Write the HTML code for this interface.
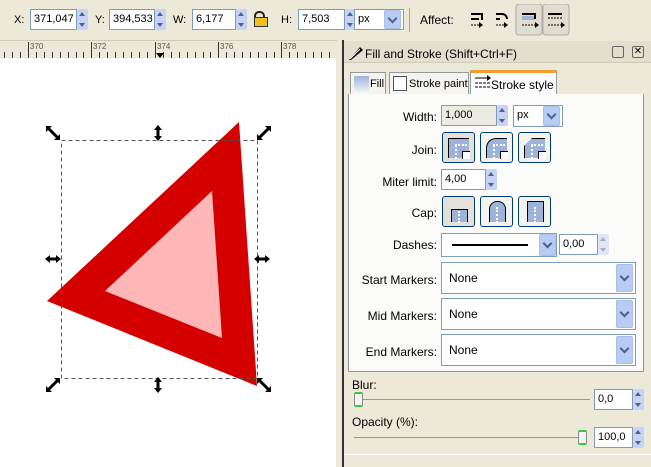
<!DOCTYPE html>
<html><head><style>
*{margin:0;padding:0;box-sizing:border-box}
body{width:651px;height:467px;overflow:hidden;background:#ece9d8;font-family:"Liberation Sans",sans-serif;font-size:11px;color:#000;position:relative}
.a{position:absolute}
.inp{position:absolute;background:#fff;border:1px solid #7f9db9;padding:2px 3px;font-size:11px;height:21px;line-height:15px}
.spin{position:absolute;width:11px;height:21px;background:#c6d3f7;border-radius:2px}
.spin:before{content:"";position:absolute;left:2px;top:3px;border:3px solid transparent;border-bottom:4px solid #4d6185;border-top:0}
.spin:after{content:"";position:absolute;left:2px;bottom:3px;border:3px solid transparent;border-top:4px solid #4d6185;border-bottom:0}
.dd{position:absolute;width:17px;background:#b8cbf5;border-radius:2px;border:1px solid #a9bfe9}
.dd:after{content:"";position:absolute;left:4px;top:50%;width:5px;height:5px;border-right:2px solid #4d6185;border-bottom:2px solid #4d6185;transform:rotate(45deg);margin-top:-5px}
.lbl{position:absolute;text-align:right;width:100px}
.btn{position:absolute;width:33px;height:31px;border:1px solid #003c74;border-radius:3px;background:#f4f3ee}
.btn i{position:absolute;left:5px;top:5px;width:21px;height:20px;background:#9db3d8;border:1px solid #000;border-width:1px 0 0 1px}
.btn b{position:absolute;border-left:2px dotted #fff}
.btn u{position:absolute;left:19px;top:18px;width:8px;height:8px;background:#fff;border:1px solid #000;border-width:1px 0 0 1px}
</style></head><body>
<div class="a" style="left:14px;top:14px">X:</div>
<div class="inp" style="left:30px;top:9px;width:47px">371,047</div><div class="spin" style="left:77px;top:9px"></div>
<div class="a" style="left:95px;top:14px">Y:</div>
<div class="inp" style="left:109px;top:9px;width:46px">394,533</div><div class="spin" style="left:155px;top:9px"></div>
<div class="a" style="left:173px;top:14px">W:</div>
<div class="inp" style="left:192px;top:9px;width:44px">6,177</div><div class="spin" style="left:236px;top:9px"></div>
<div class="a" style="left:254px;top:11px;width:11px;border:2px solid #222;border-radius:5px 5px 0 0;border-bottom:0;height:8px"></div>
<div class="a" style="left:254px;top:17px;width:14px;height:10px;background:#f0c020;border:1px solid #333"></div>
<div class="a" style="left:281px;top:14px">H:</div>
<div class="inp" style="left:298px;top:9px;width:47px">7,503</div><div class="spin" style="left:345px;top:9px"></div>
<div class="inp" style="left:354px;top:9px;width:50px">px</div><div class="dd" style="left:384px;top:10px;height:19px"></div>
<div class="a" style="left:409px;top:8px;width:1px;height:24px;background:#aca899"></div>
<div class="a" style="left:420px;top:13px;font-size:12px">Affect:</div>
<svg class="a" style="left:466px;top:4px" width="190" height="32">
<rect x="50" y="0" width="26" height="31" rx="3" fill="#e0ddd0" stroke="#aaa"/><rect x="77" y="0" width="26" height="31" rx="3" fill="#e0ddd0" stroke="#aaa"/>
<g stroke="#000" stroke-width="2" fill="none"><path d="M5 10h11v6M5 15h8"/><path d="M30 10h6a5 5 0 0 1 5 5M30 15h4"/><path d="M56 10h13v5"/><path d="M82 10h14"/></g>
<rect x="56" y="12" width="12" height="4" fill="#9db3d8"/>
<g fill="#000"><path d="M13 18l4 3-4 3z M38 18l4 3-4 3z M69 18l4 3-4 3z M95 18l4 3-4 3z"/></g>
<g stroke="#000" stroke-dasharray="2 1"><path d="M5 21h9M30 21h9M56 21h13M82 21h14M82 14h14"/></g>
</svg>
<div class="a" style="left:0;top:40px;width:337px;height:18px;background:#ece9d8;border-top:1px solid #d0ccb8"></div>
<svg class="a" style="left:0;top:40px" width="337" height="18">
<g stroke="#333"><path d="M28.5 2v16M91.5 2v16M155.5 2v16M218.5 2v16M281.5 2v16"/>
<path d="M4.5 12v6M12.5 12v6M20.5 12v6M36.5 12v6M44.5 12v6M52.5 12v6M60.5 12v6M68.5 12v6M76.5 12v6M83.5 12v6M99.5 12v6M107.5 12v6M115.5 12v6M123.5 12v6M131.5 12v6M139.5 12v6M147.5 12v6M163.5 12v6M171.5 12v6M179.5 12v6M187.5 12v6M195.5 12v6M203.5 12v6M210.5 12v6M226.5 12v6M234.5 12v6M242.5 12v6M250.5 12v6M258.5 12v6M266.5 12v6M274.5 12v6M289.5 12v6M297.5 12v6M305.5 12v6M313.5 12v6M321.5 12v6M329.5 12v6"/></g>
<g font-size="8" fill="#555" font-family="Liberation Sans"><text x="30" y="9">370</text><text x="93" y="9">372</text><text x="157" y="9">374</text><text x="220" y="9">376</text><text x="283" y="9">378</text></g>
<path d="M156 13h8l-4 5z" fill="#000"/>
</svg>
<div class="a" style="left:0;top:58px;width:336px;height:409px;background:#fff"></div>
<svg class="a" style="left:0;top:58px" width="336" height="409">
<defs>
<g id="dg"><path d="M-5 -5L5 5" stroke="#000" stroke-width="3"/><path d="M-7 -7h6l-6 6z M7 7h-6l6 -6z" fill="#000"/></g>
<g id="vt"><path d="M0 -5V5" stroke="#000" stroke-width="3"/><path d="M-4 -3L0 -8L4 -3z M-4 3L0 8L4 3z" fill="#000"/></g>
</defs>
<g transform="translate(0,-58)">
<path d="M239 122L47 301L257 386Z" fill="#d40000"/>
<path d="M212 191L105 291L222 338Z" fill="#ffb6b6"/>
<rect x="61.5" y="140.5" width="196" height="238" fill="none" stroke="#555" stroke-dasharray="4 3"/>
<use href="#dg" x="53" y="133"/>
<use href="#dg" transform="translate(264,133) rotate(90)"/>
<use href="#dg" transform="translate(53,385) rotate(90)"/>
<use href="#dg" x="264" y="385"/>
<use href="#vt" x="158" y="133"/>
<use href="#vt" x="158" y="385"/>
<use href="#vt" transform="translate(53,259) rotate(90)"/>
<use href="#vt" transform="translate(262,259) rotate(90)"/>
</g></svg>
<div class="a" style="left:342px;top:40px;width:2px;height:427px;background:#333"></div>
<div class="a" style="left:344px;top:41px;width:307px;height:426px;background:#ece9d8"></div>
<div class="a" style="left:344px;top:41px;width:307px;height:22px;background:#e2dfcf;border-bottom:1px solid #cfcbb8"></div>
<svg class="a" style="left:348px;top:45px" width="16" height="16"><path d="M1 15L12 2l3 3L3 15z" fill="#000"/><path d="M2 14L12 4" stroke="#fff"/></svg>
<div class="a" style="left:365px;top:47px;font-size:12px">Fill and Stroke (Shift+Ctrl+F)</div>
<div class="a" style="left:612px;top:46px;width:12px;height:12px;border:1px solid #666;border-radius:2px"></div>
<div class="a" style="left:632px;top:46px;width:12px;height:12px;border:1px solid #666;border-radius:2px;font-size:10px;line-height:10px;text-align:center">✕</div>
<div class="a" style="left:350px;top:72px;width:36px;height:22px;background:#f4f3ee;border:1px solid #919b9c;border-bottom:0"><div class="a" style="left:3px;top:3px;width:15px;height:15px;background:linear-gradient(#9cb4d8,#e8eef8)"></div><span class="a" style="left:19px;top:5px">Fill</span></div>
<div class="a" style="left:389px;top:72px;width:80px;height:22px;background:#f4f3ee;border:1px solid #919b9c;border-bottom:0"><div class="a" style="left:3px;top:3px;width:14px;height:15px;border:1px solid #555;background:#fff"></div><span class="a" style="left:19px;top:5px">Stroke paint</span></div>
<div class="a" style="left:470px;top:70px;width:87px;height:25px;background:#fcfcfe;border:1px solid #919b9c;border-top:3px solid #f0a030;border-bottom:0"><svg class="a" style="left:3px;top:2px" width="18" height="14"><path d="M1 3h13M1 8h15M1 12h15" stroke="#000" stroke-dasharray="3 1"/><path d="M1 3h13" stroke="#000"/><path d="M13 0l4 3-4 3z"/></svg><span class="a" style="left:20px;top:5px;font-size:12px">Stroke style</span></div>
<div class="a" style="left:348px;top:94px;width:296px;height:278px;background:#fbfbf9;border:1px solid #919b9c;border-top:0"></div>
<div class="lbl" style="left:337px;top:110px;font-size:12px">Width:</div>
<div class="inp" style="left:441px;top:105px;width:56px;background:#ecebe1">1,000</div><div class="spin" style="left:497px;top:105px"></div>
<div class="inp" style="left:513px;top:105px;width:50px;height:22px">px</div><div class="dd" style="left:543px;top:106px;height:20px"></div>
<div class="lbl" style="left:337px;top:143px;font-size:12px">Join:</div>
<div class="btn" style="left:442px;top:132px;background:#e3e1d9"><i></i><b style="left:12px;top:12px;height:14px"></b><b style="left:12px;top:11px;width:12px;height:0;border-left:0;border-top:2px dotted #fff"></b><u></u></div>
<div class="btn" style="left:480px;top:132px"><i style="border-radius:10px 0 0 0"></i><b style="left:12px;top:12px;height:14px"></b><b style="left:12px;top:11px;width:12px;height:0;border-left:0;border-top:2px dotted #fff"></b><u></u></div>
<div class="btn" style="left:518px;top:132px"><i style="clip-path:polygon(8px 0,100% 0,100% 100%,0 100%,0 8px)"></i><b style="left:12px;top:12px;height:14px"></b><b style="left:12px;top:11px;width:12px;height:0;border-left:0;border-top:2px dotted #fff"></b><u></u></div>
<div class="lbl" style="left:337px;top:175px;font-size:12px">Miter limit:</div>
<div class="inp" style="left:441px;top:169px;width:45px">4,00</div><div class="spin" style="left:486px;top:169px"></div>
<div class="lbl" style="left:337px;top:206px;font-size:12px">Cap:</div>
<div class="btn" style="left:442px;top:196px;background:#e3e1d9"><i style="left:8px;top:12px;width:17px;height:13px;border-width:1px 1px 0 1px"></i><b style="left:15px;top:14px;height:12px"></b></div>
<div class="btn" style="left:480px;top:196px"><i style="left:8px;top:4px;width:17px;height:21px;border-width:1px 1px 0 1px;border-radius:8px 8px 0 0"></i><b style="left:15px;top:10px;height:16px"></b></div>
<div class="btn" style="left:518px;top:196px"><i style="left:8px;top:4px;width:17px;height:21px;border-width:1px 1px 0 1px"></i><b style="left:15px;top:10px;height:16px"></b></div>
<div class="lbl" style="left:337px;top:238px;font-size:12px">Dashes:</div>
<div class="inp" style="left:441px;top:233px;width:116px;height:24px"></div><div class="a" style="left:452px;top:244px;width:76px;height:2px;background:#000"></div><div class="dd" style="left:539px;top:234px;height:22px"></div>
<div class="inp" style="left:559px;top:234px;width:39px">0,00</div><div class="spin" style="left:598px;top:234px;opacity:.5"></div>
<div class="lbl" style="left:337px;top:273px;font-size:12px">Start Markers:</div>
<div class="inp" style="left:441px;top:262px;width:195px;height:32px;padding:8px 7px;font-size:12px">None</div><div class="dd" style="left:616px;top:264px;height:28px"></div>
<div class="lbl" style="left:337px;top:309px;font-size:12px">Mid Markers:</div>
<div class="inp" style="left:441px;top:298px;width:195px;height:32px;padding:8px 7px;font-size:12px">None</div><div class="dd" style="left:616px;top:300px;height:28px"></div>
<div class="lbl" style="left:337px;top:345px;font-size:12px">End Markers:</div>
<div class="inp" style="left:441px;top:334px;width:195px;height:32px;padding:8px 7px;font-size:12px">None</div><div class="dd" style="left:616px;top:336px;height:28px"></div>
<div class="a" style="left:352px;top:378px;font-size:12px">Blur:</div>
<div class="a" style="left:360px;top:399px;width:230px;height:1px;background:#999"></div>
<div class="a" style="left:354px;top:392px;width:9px;height:15px;background:#f4f4f0;border:1px solid #888;border-top:2px solid #3c3;border-bottom:2px solid #3c3;border-radius:2px"></div>
<div class="inp" style="left:594px;top:389px;width:39px">0,0</div><div class="spin" style="left:633px;top:389px"></div>
<div class="a" style="left:352px;top:415px;font-size:12px">Opacity (%):</div>
<div class="a" style="left:354px;top:437px;width:230px;height:1px;background:#999"></div>
<div class="a" style="left:578px;top:430px;width:9px;height:15px;background:#f4f4f0;border:1px solid #888;border-top:2px solid #3c3;border-bottom:2px solid #3c3;border-radius:2px"></div>
<div class="inp" style="left:594px;top:427px;width:39px">100,0</div><div class="spin" style="left:633px;top:427px"></div>
<div class="a" style="left:344px;top:454px;width:307px;height:1px;background:#fff"></div>
</body></html>
